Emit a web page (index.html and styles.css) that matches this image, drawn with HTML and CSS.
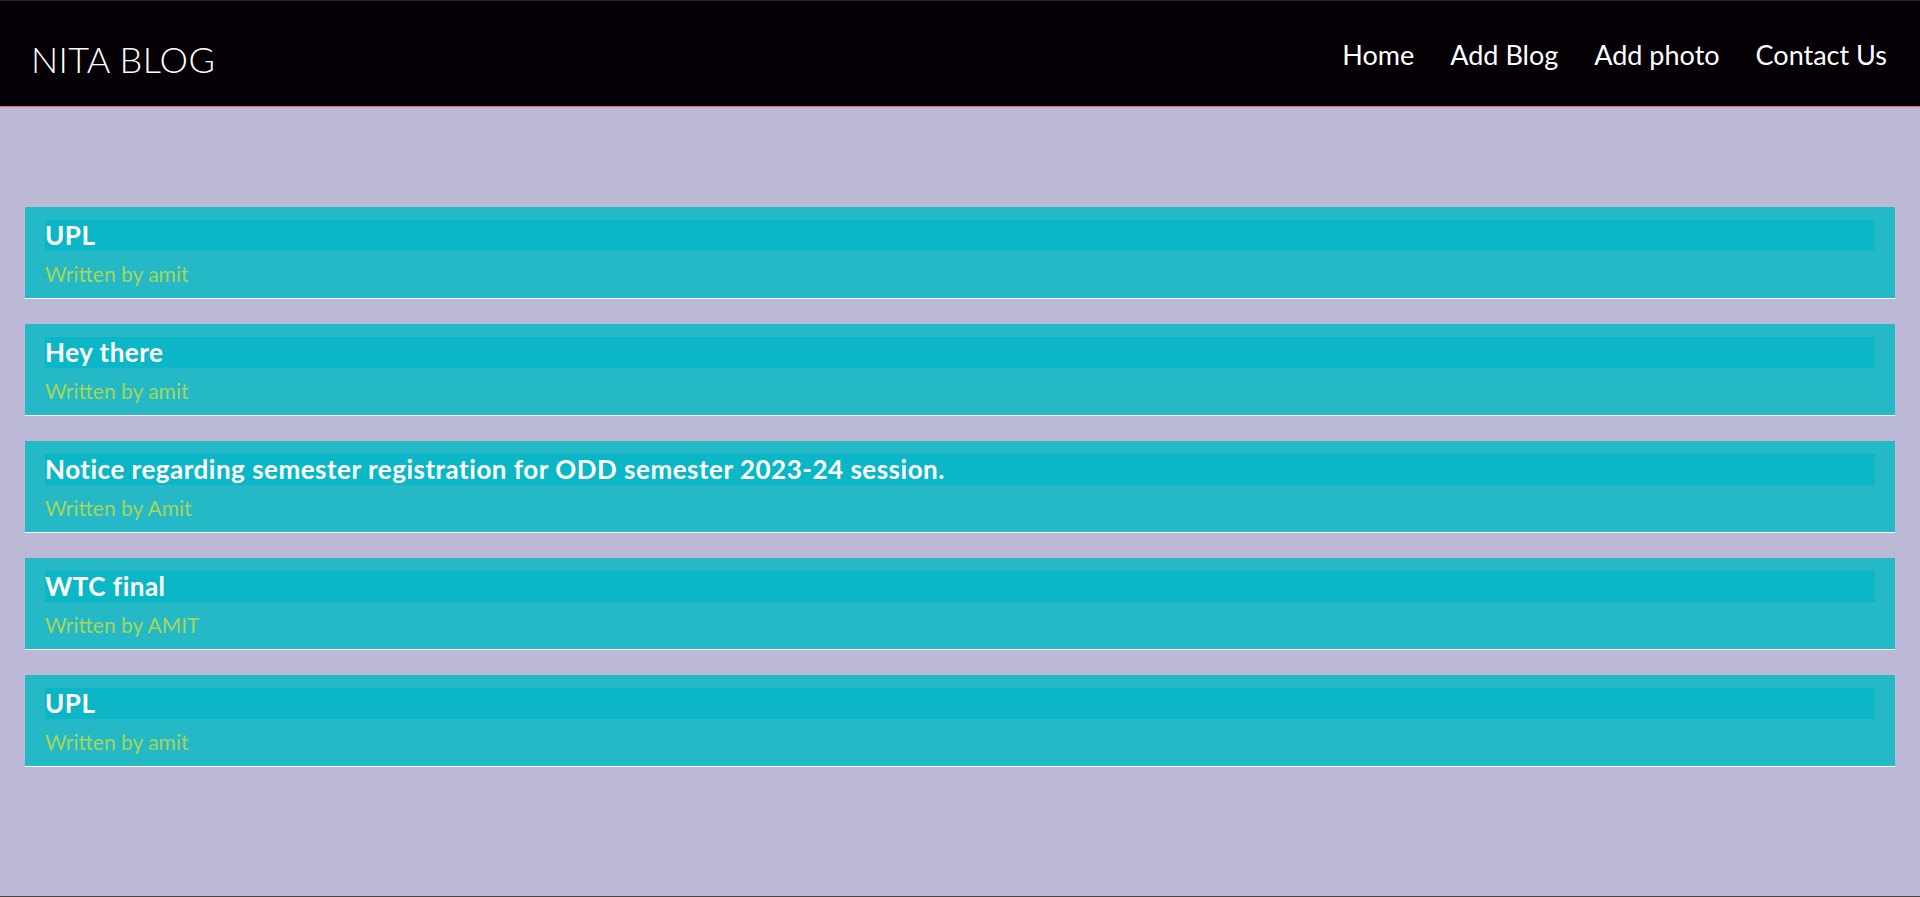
FILE: index.html
```html
<!DOCTYPE html>
<html lang="en">
<head>
<meta charset="utf-8">
<title>NITA BLOG</title>
<link rel="stylesheet" href="styles.css">
</head>
<body>
<header class="topbar">
  <a class="brand" href="#">NITA BLOG</a>
  <nav class="nav">
    <a href="#">Home</a>
    <a href="#">Add Blog</a>
    <a href="#">Add photo</a>
    <a href="#">Contact Us</a>
  </nav>
</header>
<main class="posts">
  <article class="post">
    <h2 class="post-title">UPL</h2>
    <p class="post-author">Written by amit</p>
  </article>
  <article class="post">
    <h2 class="post-title">Hey there</h2>
    <p class="post-author">Written by amit</p>
  </article>
  <article class="post">
    <h2 class="post-title">Notice regarding semester registration for ODD semester 2023-24 session.</h2>
    <p class="post-author">Written by Amit</p>
  </article>
  <article class="post">
    <h2 class="post-title">WTC final</h2>
    <p class="post-author">Written by AMIT</p>
  </article>
  <article class="post">
    <h2 class="post-title">UPL</h2>
    <p class="post-author">Written by amit</p>
  </article>
</main>
</body>
</html>
```

FILE: styles.css
```css
* { box-sizing: border-box; }

html, body {
  margin: 0;
  padding: 0;
}

body {
  min-height: 100vh;
  background: #bcb9d6;
  border-top: 1px solid #2b2836;
  border-bottom: 1px solid #4a4541;
  font-family: "Lato", "Noto Sans", sans-serif;
}

.topbar {
  height: 106px;
  background: #050005;
  border-bottom: 1px solid #d4705e;
  display: flex;
  align-items: center;
  justify-content: space-between;
  padding: 0 33px 0 31px;
}

.brand {
  color: #ffffff;
  text-decoration: none;
  font-size: 36px;
  font-weight: 300;
  margin-top: 11px;
  letter-spacing: 0.3px;
}

.nav {
  display: flex;
  gap: 36px;
  margin-top: 2px;
}

.nav a {
  color: #ffffff;
  text-decoration: none;
  font-size: 27px;
  font-weight: 400;
}

.posts {
  padding: 100px 25px 40px;
  display: flex;
  flex-direction: column;
  gap: 25px;
}

.post {
  background: #25b8c6;
  border-bottom: 1px solid #ffffff;
  padding: 13px 20px 12px;
}

.post-title {
  margin: 0 0 11px;
  height: 31px;
  line-height: 31px;
  background: #0bb7c6;
  color: #ffffff;
  font-size: 26px;
  font-weight: 700;
  letter-spacing: 0.5px;
}

.post-author {
  margin: 0;
  line-height: 24px;
  font-size: 21px;
  color: #a4d65c;
}
```
